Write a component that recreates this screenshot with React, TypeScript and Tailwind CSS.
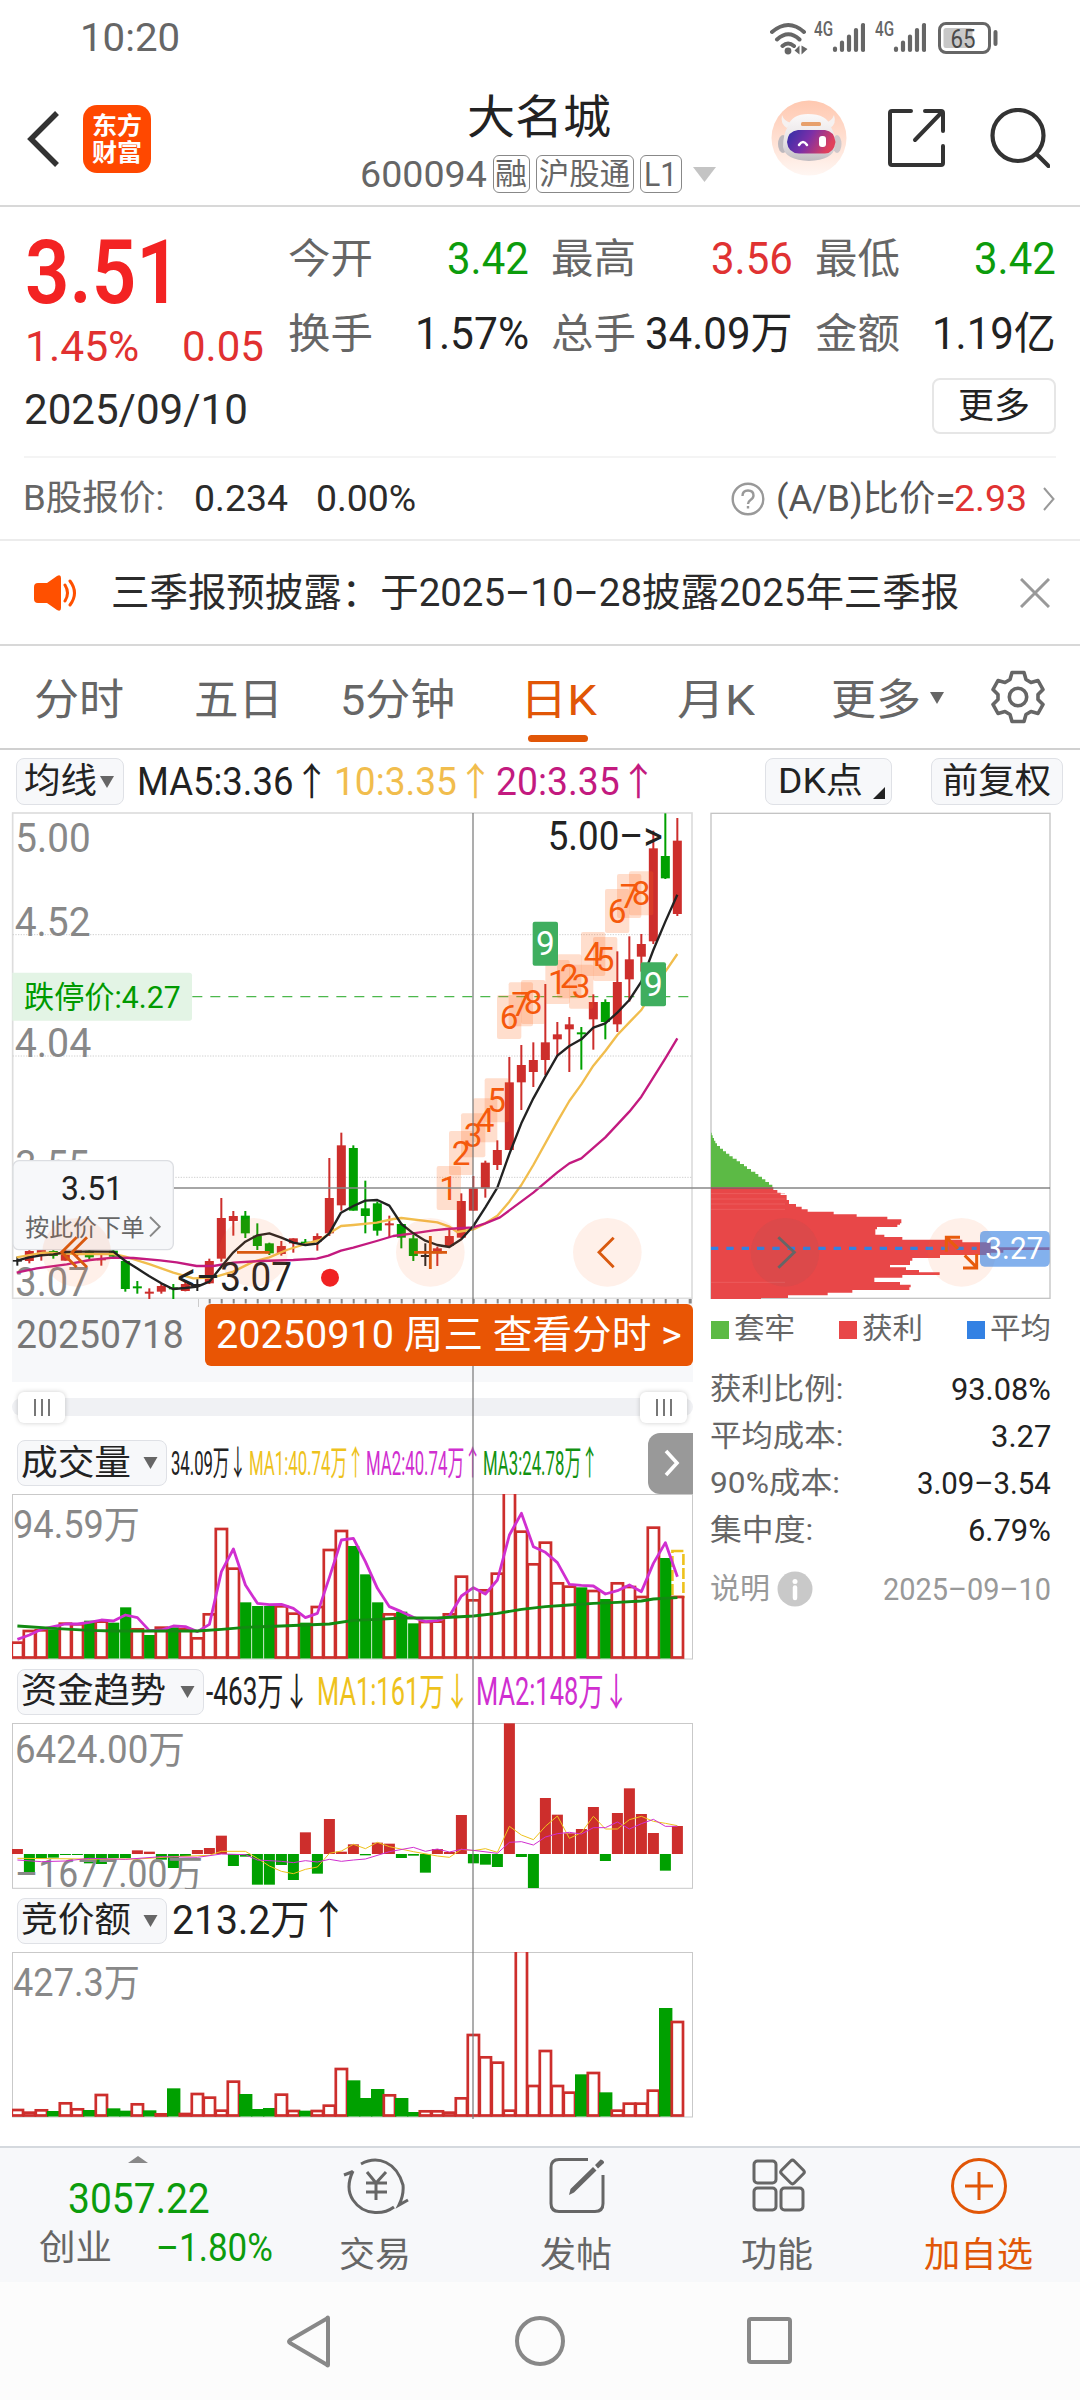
import { useLayoutEffect, useRef, useState, type ReactNode } from "react";

const RED = "#cd2e2c";
const GREEN = "#00a000";

/* One line of text, scaled horizontally so that it fills a given width. */
function Fit({ w, className = "", children }: { w: number; className?: string; children: ReactNode }) {
  const ref = useRef<HTMLSpanElement>(null);
  const [scale, setScale] = useState(1);
  useLayoutEffect(() => {
    if (ref.current) setScale((w + 3) / ref.current.offsetWidth);
  }, [w]);
  return (
    <span className={`block shrink-0 leading-none ${className}`} style={{ width: w }}>
      <span
        ref={ref}
        className="-ml-[2px] inline-block origin-left whitespace-pre align-top"
        style={{ transform: `scaleX(${scale})` }}
      >
        {children}
      </span>
    </span>
  );
}

function Label({ x, y, w, size, fill = "#888", children }: { x: number; y: number; w: number; size: number; fill?: string; children: ReactNode }) {
  return (
    <text x={x} y={y} fontSize={size} fill={fill} textLength={w} lengthAdjust="spacingAndGlyphs">
      {children}
    </text>
  );
}

function Down({ className = "" }: { className?: string }) {
  return (
    <svg viewBox="0 0 14 12" className={className} fill="#666">
      <path d="M0 0h14L7 12z" />
    </svg>
  );
}

/* ---------- chart data ---------- */

type Candle = [string, number, number, number, number];

// colour, body top, body bottom, wick top, wick bottom
const candles: Candle[] = [
  ["k", 1380, 1385, 1370, 1397], ["r", 1353, 1383, 1350, 1390], ["r", 1350, 1368, 1350, 1382],
  ["g", 1353, 1368, 1350, 1376], ["r", 1352, 1382, 1350, 1382], ["r", 1350, 1365, 1350, 1368],
  ["g", 1352, 1372, 1350, 1380], ["r", 1376, 1381, 1365, 1397], ["g", 1352, 1370, 1350, 1372],
  ["g", 1383, 1467, 1380, 1475], ["g", 1459, 1465, 1443, 1481], ["r", 1475, 1481, 1465, 1497],
  ["r", 1458, 1475, 1450, 1481], ["g", 1462, 1468, 1452, 1497], ["r", 1452, 1473, 1445, 1474],
  ["k", 1452, 1458, 1435, 1473], ["r", 1383, 1450, 1376, 1452], ["r", 1254, 1376, 1194, 1385],
  ["r", 1248, 1263, 1233, 1307], ["g", 1247, 1300, 1233, 1314], ["g", 1307, 1338, 1270, 1350],
  ["g", 1330, 1360, 1328, 1365], ["r", 1338, 1362, 1323, 1367], ["r", 1315, 1330, 1315, 1358],
  ["g", 1325, 1330, 1317, 1335], ["r", 1308, 1325, 1300, 1352], ["r", 1194, 1300, 1074, 1308],
  ["r", 1036, 1216, 998, 1232], ["g", 1044, 1232, 1036, 1232], ["g", 1225, 1248, 1142, 1300],
  ["g", 1210, 1292, 1205, 1307], ["r", 1270, 1276, 1247, 1312], ["g", 1272, 1313, 1270, 1345],
  ["g", 1315, 1368, 1305, 1383], ["k", 1365, 1371, 1330, 1398], ["r", 1345, 1360, 1340, 1398],
  ["r", 1308, 1338, 1290, 1340], ["r", 1203, 1313, 1180, 1315], ["r", 1165, 1232, 1128, 1232],
  ["r", 1088, 1165, 1082, 1193], ["r", 1050, 1095, 1021, 1110], ["r", 847, 1050, 771, 1050],
  ["r", 795, 847, 735, 930], ["r", 780, 816, 727, 861], ["r", 727, 780, 552, 825],
  ["r", 703, 718, 666, 770], ["r", 673, 688, 651, 816], ["g", 697, 703, 681, 809],
  ["r", 606, 658, 583, 749], ["g", 606, 666, 598, 718], ["r", 546, 673, 454, 696],
  ["r", 478, 538, 409, 605], ["r", 432, 470, 402, 515], ["r", 145, 424, 92, 432],
  ["g", 168, 235, 40, 237], ["r", 122, 342, 54, 348],
];

const tags: [string, number, number][] = [
  ["1", 1310, 1098], ["2", 1347, 993], ["3", 1383, 940], ["4", 1419, 895], ["5", 1454, 835],
  ["6", 1491, 585], ["7", 1526, 547], ["8", 1563, 540], ["9", 1598, 365], ["1", 1636, 480],
  ["2", 1671, 463], ["3", 1707, 494], ["4", 1743, 396], ["5", 1779, 411], ["6", 1815, 267],
  ["7", 1851, 222], ["8", 1887, 214], ["9", 1922, 487],
];

const ma5 =
  "50,1382 88,1372 123,1366 160,1363 200,1356 267,1354 340,1355 376,1383 411,1405 447,1428 484,1450 519,1467 556,1464 592,1460 628,1445 664,1400 700,1357 736,1325 772,1306 808,1300 844,1313 880,1328 916,1335 952,1331 988,1300 1023,1238 1060,1218 1096,1202 1132,1200 1168,1217 1204,1272 1240,1300 1276,1322 1312,1335 1348,1341 1384,1318 1420,1278 1456,1222 1492,1163 1528,1062 1564,970 1600,895 1636,830 1672,767 1708,738 1744,718 1780,683 1816,670 1852,638 1888,600 1924,545 1960,450 1996,365 2032,284";
const ma10 =
  "50,1372 130,1358 230,1362 340,1362 376,1370 450,1393 520,1418 580,1435 640,1432 700,1415 760,1385 808,1372 860,1350 916,1332 960,1320 1000,1292 1023,1278 1060,1275 1130,1268 1180,1257 1204,1254 1312,1267 1348,1280 1372,1296 1420,1288 1456,1270 1492,1247 1528,1205 1564,1155 1600,1095 1672,965 1708,903 1744,853 1780,797 1816,753 1852,705 1888,667 1924,630 1996,515 2032,462";
const ma20 =
  "50,1418 110,1405 200,1393 270,1380 340,1373 400,1374 480,1381 530,1387 590,1398 640,1398 700,1388 780,1383 880,1380 950,1376 985,1367 1023,1352 1060,1343 1130,1323 1180,1308 1240,1300 1300,1291 1340,1287 1420,1282 1456,1270 1500,1252 1600,1178 1672,1117 1708,1090 1744,1075 1816,1012 1888,935 1924,890 1996,775 2032,715";

const volume =
  "1055r 1020r 1018r 1018g 998r 1000r 992g 992r 998g 952g 1015r 1035g 1010r 1012g 1015r 1042r 970r 714r 833r 937g 948g 948g 946r 968r 998g 948r 777r 720r 768g 853g 937g 970r 965g 1000g 993r 992r 970r 857r 928r 898r 848r 606r 722r 820r 755r 877r 887r 892g 900r 927g 877r 888r 918r 710r 804g 918r";
const volumeMa =
  "1048 1035 1018 1010 1002 1002 997 990 993 975 983 1022 1020 1008 1010 1025 1003 845 777 885 940 944 943 955 983 970 862 750 745 815 895 950 965 982 995 992 978 918 893 912 870 735 670 770 787 818 883 886 888 912 902 885 905 820 758 860";
const volumeLong: [number, number][] = [
  [0, 1008], [3, 1015], [6, 1021], [8, 1023], [15, 1023], [17, 1018], [19, 1012], [22, 1008], [26, 1002], [28, 991], [30, 988],
  [32, 984], [35, 984], [38, 978], [40, 970], [42, 958], [44, 950], [46, 945], [48, 940], [50, 937], [52, 933], [53, 927], [55, 923],
];
const funds =
  "567r 638g 595g 593g 585g 585g 610g 612g 594g 594g 571r 575r 599g 624g 588g 570r 564r 527r 618g 590g 674g 674g 615g 660g 517r 641g 477r 575r 553r 586g 548r 551r 594g 587g 638g 567r 576r 465r 610g 614g 621g 190r 591g 684g 414r 464r 520r 507r 441r 603g 459r 385r 462r 519r 632g 498r";
const fundsMa1: [number, number][] = [
  [0, 595], [6, 597], [10, 597], [13, 590], [16, 586], [17, 574], [19, 574], [20, 595], [21, 618], [22, 634], [23, 641], [24, 628],
  [25, 621], [26, 580], [27, 573], [28, 553], [29, 566], [30, 547], [31, 560], [33, 575], [35, 588], [36, 592], [37, 568], [38, 572],
  [39, 566], [40, 577], [41, 499], [42, 525], [43, 539], [44, 499], [45, 468], [46, 535], [47, 518], [48, 469], [49, 507], [50, 507],
  [51, 479], [52, 469], [53, 484], [54, 490], [55, 497],
];
const fundsMa2: [number, number][] = [
  [0, 600], [2, 605], [4, 603], [6, 595], [9, 598], [12, 590], [15, 592], [17, 582], [19, 584], [20, 600], [22, 604], [23, 608],
  [24, 602], [25, 606], [26, 598], [27, 604], [28, 600], [29, 597], [31, 575], [33, 562], [34, 574], [35, 567], [36, 576], [37, 568],
  [38, 571], [40, 580], [41, 547], [42, 545], [43, 555], [44, 531], [45, 521], [46, 517], [47, 522], [48, 503], [49, 503], [50, 486],
  [51, 507], [52, 491], [53, 478], [54, 499], [55, 499],
];
const auction =
  "1347r 1355r 1348r 1353g 1327r 1345r 1350g 1302r 1345g 1352g 1330r 1351g 1360r 1285g 1359r 1299r 1310r 1349r 1262r 1302g 1347g 1344g 1301r 1350r 1352g 1350r 1334r 1224r 1261g 1314g 1287g 1303r 1314g 1356g 1351r 1351r 1355r 1312r 1122r 1189r 1205r 1349r 870r 1275r 1170r 1275r 1295r 1243g 1236r 1297g 1349r 1328r 1328r 1289r 1044g 1083r";

const parseBars = (s: string) => s.split(" ").map((t) => ({ v: parseInt(t, 10), up: t.endsWith("r") }));
const cx = (i: number) => 17.4 + 12 * i;
const line = (base: number, pts: [number, number][]) => pts.map(([i, v]) => `${cx(i)},${base + v / 3}`).join(" ");
const volumeMaPts = volumeMa.split(" ").map((v, i) => [i, Number(v)] as [number, number]);

function HollowBars({ data, base, bottom, gap }: { data: string; base: number; bottom: number; gap: number }) {
  return (
    <g>
      {parseBars(data).map((b, i) => {
        const top = base + b.v / 3;
        return b.up ? (
          <rect key={i} x={cx(i) - 5.6} y={top + 1} width={11.2} height={Math.max(bottom - top - 2, 0.5)} fill="#fff" stroke={RED} strokeWidth={2.7} />
        ) : (
          <rect key={i} x={cx(i) - 6 + gap} y={top} width={12.6 - gap * 2} height={bottom - top} fill={GREEN} />
        );
      })}
    </g>
  );
}

/* ---------- chart panels ---------- */

function KLineChart() {
  const color: Record<string, string> = { r: RED, g: GREEN, k: "#222" };
  return (
    <svg viewBox="36 39 2043 1458" className="block h-[486px] w-[681px] overflow-visible">
      <rect x={38} y={39} width={2038} height={1456} fill="#fff" stroke="#ddd" strokeWidth={5} />
      {[404, 768, 1132].map((y) => (
        <line key={y} x1={38} x2={2078} y1={y} y2={y} stroke="#d0d0d0" strokeWidth={3} strokeDasharray="4 4" />
      ))}
      <line x1={577} x2={2070} y1={590} y2={590} stroke="#4cb84c" strokeWidth={4} strokeDasharray="30 24" />
      {candles.map(([c, t, b, wt, wb], i) => {
        const x = 52 + 36 * i;
        return (
          <g key={i} fill={color[c]}>
            <rect x={x - 3} y={wt} width={6} height={wb - wt} />
            <rect x={x - 13.5} y={t} width={27} height={b - t} />
          </g>
        );
      })}
      <Label x={46} y={157} w={226} size={123}>5.00</Label>
      <Label x={44} y={409} w={228} size={123}>4.52</Label>
      <Label x={44} y={772} w={230} size={123}>4.04</Label>
      <Label x={46} y={1138} w={222} size={123}>3.55</Label>
      <Label x={46} y={1489} w={222} size={123}>3.07</Label>
      {tags.map(([n, x, y], i) =>
        n === "9" ? null : (
          <rect key={i} x={x} y={y} width={73} height={132} rx={6} fill="#ff6a1a" fillOpacity={0.22} />
        ),
      )}
      {tags.map(([n, x, y], i) =>
        n === "9" ? null : (
          <text key={i} x={x + 36} y={y + 101} fontSize={100} fill="#f5590c" textAnchor="middle">
            {n}
          </text>
        ),
      )}
      <g fill="none" strokeWidth={7} strokeLinejoin="round">
        <polyline points={ma10} stroke="#f1bd4d" />
        <polyline points={ma20} stroke="#c31a7f" />
        <polyline points={ma5} stroke="#222" />
      </g>
      {tags.map(([n, x, y], i) =>
        n === "9" ? (
          <g key={i}>
            <rect x={x} y={y} width={76} height={132} rx={6} fill="#3fae5f" />
            <text x={x + 38} y={y + 101} fontSize={100} fill="#fff" textAnchor="middle">
              9
            </text>
          </g>
        ) : null,
      )}
      <Label x={1643} y={151} w={345} size={121} fill="#222">5.00–&gt;</Label>
      <Label x={532} y={1472} w={344} size={121} fill="#222">&lt;–3.07</Label>
      <circle cx={990} cy={1433} r={27} fill="#f02222" />
      <path d="M37 518H568q8 0 8 8V654q0 8-8 8H37z" fill="#e3f4e5" />
      <Label x={72} y={623} w={470} size={92} fill="#009a00">跌停价:4.27</Label>
      <line x1={520} x2={2133} y1={1164} y2={1164} stroke="#888" strokeWidth={4} />
      <rect x={39} y={1082} width={481} height={267} rx={18} fill="#f7f8fa" stroke="#dcdee2" strokeWidth={4} />
      <Label x={183} y={1199} w={186} size={101} fill="#222">3.51</Label>
      <Label x={76} y={1308} w={358} size={72} fill="#666">按此价下单</Label>
      <path d="M450 1251l29 29-29 29" fill="none" stroke="#888" strokeWidth={6} />
      <g fill="#fb6a24" fillOpacity={0.1}>
        {[230, 760, 1291, 1822].map((x) => (
          <circle key={x} cx={x} cy={1357} r={103} />
        ))}
      </g>
      <g fill="none" stroke="#d9590f" strokeWidth={8.5}>
        <path d="M230 1312l-45 45 45 45M261 1312l-45 45 45 45M711 1357h98M1242 1357h99M1291 1308v99M1841 1313l-44 44 44 45" />
      </g>
    </svg>
  );
}

function ChipChart() {
  return (
    <svg viewBox="2133 39 1017 1458" className="block h-[486px] w-[339px] overflow-visible">
      <rect x={2133} y={40} width={1017} height={1455} fill="#fff" stroke="#c4c4c4" strokeWidth={4} />
      <g transform="translate(2070 900)">
        <path d="M63 98h2v8h3v8h4v8h4v8h5v8h9v8h9v8h9v7h10v8h10v7h12v8h10v8h12v7h9v8h12v8h13v7h9v8h11v8h10v8h11v8h10v8H63z" fill="#5cba45" />
        <path
          d="M63 262H250V270H262V278H272V285H290V300H297V312H318V320H335V328H353V335H431V343H500V350H592V358H634V370H630V374H622V381H561V388H556V404H583V411H637V419H817V427H902V442H1078V450H940V458H902V465H750V474H667V482H660V495H600V502H648V510H687V517H749V525H637V533H553V546H630V554H662V562H658V570H487V578H413V586H294V594H213V597H63z"
          fill="#e84748"
        />
        {[281, 297, 312, 328, 547].map((y) => (
          <line key={y} x1={63} x2={285} y1={y} y2={y} stroke="#f07070" strokeWidth={1.5} />
        ))}
        <line x1={63} x2={860} y1={445} y2={445} stroke="#3381e3" strokeWidth={10} strokeDasharray="22 24" />
        <line x1={63} x2={1080} y1={264} y2={264} stroke="#666" strokeOpacity={0.8} strokeWidth={4} />
        <circle cx={285} cy={457} r={103} fill="#666" fillOpacity={0.09} />
        <path d="M265 412l48 45-48 46" fill="none" stroke="#666" strokeWidth={8.5} />
        <circle cx={815} cy={457} r={103} fill="#fb6a24" fillOpacity={0.1} />
        <path d="M769 455V412H810M770 413l34 33M824 466l36 36M860 462v42H819" fill="none" stroke="#e85b0c" strokeWidth={9} />
        <rect x={870} y={393} width={209} height={107} rx={14} fill="#3d85e3" fillOpacity={0.64} />
        <Label x={886} y={478} w={174} size={94} fill="#fff">3.27</Label>
      </g>
    </svg>
  );
}

function VolumeChart() {
  return (
    <svg viewBox="12 1494 681 166" className="block h-[166px] w-[681px]">
      <rect x={12.5} y={1494.5} width={680} height={164.5} fill="#fff" stroke="#c9c9c9" />
      <Label x={13} y={1538} w={127} size={38}>94.59万</Label>
      <rect x={cx(55) - 5} y={1551} width={11} height={46} fill="none" stroke="#eec21c" strokeWidth={2.6} strokeDasharray="11 3" />
      <HollowBars data={volume} base={1290} bottom={1658.5} gap={0.7} />
      <g fill="none" strokeLinejoin="round" strokeWidth={2.8}>
        <polyline points={line(1290, volumeMaPts)} stroke="#d02fd0" />
        <polyline points={line(1290, volumeLong)} stroke="#128a12" />
      </g>
    </svg>
  );
}

function FundsChart() {
  return (
    <svg viewBox="12 1723 681 166" className="block h-[166px] w-[681px]">
      <rect x={12.5} y={1723.5} width={680} height={164.8} fill="#fff" stroke="#c9c9c9" />
      {parseBars(funds).map((b, i) => {
        const y = 1660 + b.v / 3;
        return <rect key={i} x={cx(i) - 5.5} y={Math.min(y, 1854)} width={11} height={Math.abs(y - 1854)} fill={b.up ? RED : GREEN} />;
      })}
      <Label x={15} y={1763} w={170} size={38}>6424.00万</Label>
      <Label x={15} y={1886.5} w={188} size={38}>–1677.00万</Label>
      <g fill="none">
        <polyline points={line(1660, fundsMa1)} stroke="#eec21c" />
        <polyline points={line(1660, fundsMa2)} stroke="#d02fd0" />
      </g>
    </svg>
  );
}

function AuctionChart() {
  return (
    <svg viewBox="12 1952 681 166" className="block h-[166px] w-[681px]">
      <rect x={12.5} y={1952.5} width={680} height={164.5} fill="#fff" stroke="#c9c9c9" />
      <Label x={13} y={1996} w={127} size={38}>427.3万</Label>
      <HollowBars data={auction} base={1660} bottom={2116.5} gap={-0.4} />
    </svg>
  );
}

function Picker({ w, text, className }: { w: number; text: string; className: string }) {
  return (
    <div className={`ml-[5px] flex h-[46px] shrink-0 items-center justify-between rounded-lg border border-[#dfe1e6] bg-[#f7f8fa] pr-2 pl-[5px] text-[35px] text-[#222] ${className}`}>
      <Fit w={w}>{text}</Fit>
      <Down className="h-[12px] w-[15px]" />
    </div>
  );
}

/* ---------- page sections ---------- */

function Signal() {
  return (
    <div className="flex h-[32px] items-start">
      <Fit w={16} className="-mt-[3px] ml-[1px] text-[20px] font-medium">4G</Fit>
      <svg viewBox="0 0 33 32" className="h-[32px] w-[33px]" stroke="#666" strokeWidth={4.2} strokeLinecap="round">
        <path d="M3 26.500v1.500M10 20.500v7.500M17 14.500v13.500M24 8v20M31 3v25" />
      </svg>
    </div>
  );
}

function StatusBar() {
  return (
    <div className="flex h-[76px] items-center pr-[82px] pl-[82px] text-[#666]">
      <Fit w={97} className="mr-auto text-[39px]">10:20</Fit>
      <svg viewBox="0 0 38 34" className="mr-[7px] h-[34px] w-[38px]" fill="none" stroke="#666" strokeWidth={4} strokeLinecap="round">
        <path d="M2 11Q18.500-3 34 11M7 18.500Q18.500 8 29.500 18.500M12.500 25Q18 20 24 25" />
        <circle cx={18} cy={30} r={3.4} fill="#666" stroke="none" />
        <path d="M29.500 24.500v9l-5-4zM31.500 24.500v9l6-5.500z" fill="#666" stroke="none" />
      </svg>
      <Signal />
      <div className="w-[11px]" />
      <Signal />
      <svg viewBox="0 0 60 32" className="ml-[12px] h-[32px] w-[60px]">
        <rect x={1.500} y={1.500} width={50} height={29} rx={6.500} fill="none" stroke="#666" strokeWidth={3} />
        <rect x={5.500} y={6} width={29} height={20} rx={2.500} fill="#c8c8c8" />
        <rect x={55.500} y={8} width={4} height={16} rx={2} fill="#666" />
        <text x={12.500} y={25.500} fontSize={25} fill="#4a4a4a" textLength={25} lengthAdjust="spacingAndGlyphs">65</text>
      </svg>
    </div>
  );
}

function Robot() {
  return (
    <svg viewBox="0 0 76 76" className="h-[76px] w-[76px]">
      <defs>
        <linearGradient id="halo" x1="0" x2="0" y1="0" y2="1">
          <stop offset="0" stopColor="#ffc8b0" />
          <stop offset="1" stopColor="#fff6f2" />
        </linearGradient>
        <linearGradient id="visor" x1="0" x2="1" y1="0" y2="0.300">
          <stop offset="0" stopColor="#2f2fa8" />
          <stop offset="0.500" stopColor="#7a2fa8" />
          <stop offset="1" stopColor="#e0405c" />
        </linearGradient>
        <linearGradient id="shell" x1="0" x2="0" y1="0" y2="1">
          <stop offset="0" stopColor="#fbf9f9" />
          <stop offset="0.600" stopColor="#e6e2e4" />
          <stop offset="1" stopColor="#bfbbc0" />
        </linearGradient>
      </defs>
      <circle cx={38} cy={38} r={37.500} fill="url(#halo)" />
      <path d="M11 15Q9 24 16 28L20 23Q13 21 11 15zM63 15Q66 24 59 28L54 23Q61 21 63 15z" fill="#f6f1f0" />
      <ellipse cx={12} cy={44} rx={5} ry={9} fill="#bdb8bd" />
      <ellipse cx={66} cy={44} rx={4.500} ry={9} fill="#cfc8cb" />
      <path d="M37 14Q56 14 60 27Q65 36 64 47Q62 60 38 61Q14 60 12 47Q12 35 17 26Q21 14 37 14z" fill="url(#shell)" />
      <rect x={30} y={22} width={20} height={4} rx={1.500} fill="#e7a06c" />
      <path d="M27 30H54Q63 31 64.500 42Q63 53 54 53.500H28Q17 53 16 42Q17 31 27 30z" fill="url(#visor)" />
      <path d="M28 45q4-6 8 0" fill="none" stroke="#fff" strokeWidth={2.500} strokeLinecap="round" />
      <rect x={48} y={36} width={7} height={11} rx={3} fill="#fff" />
    </svg>
  );
}

function Header() {
  return (
    <div className="flex h-[131px] items-start justify-between border-b-2 border-[#d8d8d8] pt-[24px] pr-[28px] pl-[26px]">
      <div className="flex w-[282px] items-center pt-[5px]">
        <svg viewBox="0 0 34 58" className="h-[58px] w-[34px]" fill="none" stroke="#333" strokeWidth={5.500}>
          <path d="M31 3L5 29l26 26" />
        </svg>
        <div className="ml-[23px] flex h-[68px] w-[68px] flex-col items-center justify-center gap-[3px] rounded-[14px] bg-[#ff4800] text-[24px] font-bold text-white">
          <Fit w={47}>东方</Fit>
          <Fit w={47}>财富</Fit>
        </div>
      </div>
      <div className="-mt-[6px] flex flex-col items-center gap-[15px]">
        <Fit w={141} className="text-[46px] text-[#222]">大名城</Fit>
        <div className="flex h-[38px] items-center text-[#666]">
          <Fit w={124} className="text-[37px]">600094</Fit>
          <div className="ml-[7px] flex h-[38px] items-center rounded-md border border-[#888] px-[3px] text-[30px]">
            <Fit w={29}>融</Fit>
          </div>
          <div className="ml-[6px] flex h-[38px] items-center rounded-md border border-[#888] px-[4px] text-[30px]">
            <Fit w={88}>沪股通</Fit>
          </div>
          <div className="ml-[6px] flex h-[38px] items-center rounded-md border border-[#888] px-[5px] text-[33px]">
            <Fit w={30}>L1</Fit>
          </div>
          <svg viewBox="0 0 23 15" className="ml-[11px] h-[15px] w-[23px]" fill="#c4c4c4">
            <path d="M0 0h23L11.500 15z" />
          </svg>
        </div>
      </div>
      <div className="flex w-[282px] items-center justify-end">
        <Robot />
        <svg viewBox="0 0 60 60" className="ml-[40px] h-[60px] w-[60px]" fill="none" stroke="#333" strokeWidth={4} strokeLinecap="round">
          <path d="M24 3H5q-2 0-2 2v50q0 2 2 2h49q2 0 2-2V38M38 3h16q2 0 2 2v18M55 4L28 32" />
        </svg>
        <svg viewBox="0 0 60 60" className="mr-[2px] ml-[43px] h-[60px] w-[60px]" fill="none" stroke="#333" strokeWidth={4.200} strokeLinecap="round">
          <circle cx={28} cy={27.500} r={25.500} />
          <path d="M46.500 46l12 12" />
        </svg>
      </div>
    </div>
  );
}

function Stat({ name, value, w, color, className }: { name: string; value: string; w: number; color: string; className: string }) {
  return (
    <div className={`flex items-center justify-between ${className}`}>
      <Fit w={82} className="text-[41px] text-[#666]">{name}</Fit>
      <Fit w={w} className={`text-[44px] ${color}`}>{value}</Fit>
    </div>
  );
}

function Quote() {
  return (
    <div className="mx-[24px] h-[251px] border-b-2 border-[#f4f4f4]">
      <div className="flex h-[166px]">
        <div className="w-[266px] pt-[21px] pl-[3px]">
          <Fit w={153} className="text-[89px] font-semibold text-[#f32323]">3.51</Fit>
          <div className="mt-[8px] flex gap-[46px] text-[43px] text-[#e13030]">
            <Fit w={111}>1.45%</Fit>
            <Fit w={79}>0.05</Fit>
          </div>
        </div>
        <div className="flex flex-col gap-[31px] pt-[30px]">
          <div className="flex h-[44px] gap-[25px]">
            <Stat name="今开" value="3.42" w={79} color="text-[#0c9c0c]" className="w-[238px]" />
            <Stat name="最高" value="3.56" w={79} color="text-[#e03232]" className="w-[239px]" />
            <Stat name="最低" value="3.42" w={79} color="text-[#0c9c0c]" className="w-[238px]" />
          </div>
          <div className="flex h-[44px] gap-[25px]">
            <Stat name="换手" value="1.57%" w={111} color="text-[#222]" className="w-[238px]" />
            <Stat name="总手" value="34.09万" w={145} color="text-[#222]" className="w-[239px]" />
            <Stat name="金额" value="1.19亿" w={121} color="text-[#222]" className="w-[238px]" />
          </div>
        </div>
      </div>
      <div className="flex h-[66px] items-center justify-between">
        <Fit w={221} className="mt-[6px] ml-[2px] text-[43px] text-[#2b2b2b]">2025/09/10</Fit>
        <div className="flex h-[56px] w-[124px] items-center justify-center rounded-lg border-2 border-[#e6e6e6] text-[35px] text-[#222]">
          <Fit w={69}>更多</Fit>
        </div>
      </div>
    </div>
  );
}

function BShare() {
  return (
    <div className="flex h-[83px] items-center border-b-2 border-[#ececec] px-[25px] text-[37px] text-[#2b2b2b]">
      <Fit w={138} className="text-[35px] text-[#666]">B股报价:</Fit>
      <Fit w={91} className="ml-[33px]">0.234</Fit>
      <Fit w={97} className="ml-[31px]">0.00%</Fit>
      <svg viewBox="0 0 34 34" className="ml-auto h-[34px] w-[34px]" fill="none" stroke="#999" strokeWidth={2.400}>
        <circle cx={17} cy={17} r={15.300} />
        <path d="M11.500 14q0-5.500 5.500-5.500t5.500 5q0 2.500-3 4.500-2.500 1.700-2.500 4M17 24v2.500" />
      </svg>
      <Fit w={176} className="ml-[13px] text-[36px] text-[#555]">(A/B)比价=</Fit>
      <Fit w={70} className="ml-[2px] text-[#e03232]">2.93</Fit>
      <svg viewBox="0 0 12 24" className="ml-[17px] h-[24px] w-[12px]" fill="none" stroke="#999" strokeWidth={2}>
        <path d="M1 1l9.500 11L1 23" />
      </svg>
    </div>
  );
}

function Notice() {
  return (
    <div className="flex h-[105px] items-center border-b-2 border-[#d8d8d8] pr-[30px] pl-[34px]">
      <svg viewBox="0 0 44 36" className="h-[36px] w-[44px]" fill="#ff5000">
        <path d="M4 8h9L23 1q4-2 4 2v30q0 4-4 2l-10-7H4q-4 0-4-4V12q0-4 4-4z" />
        <path d="M31 10q5 8 0 16M36 6q9 12 0 24" fill="none" stroke="#ff5000" strokeWidth={3} strokeLinecap="round" />
      </svg>
      <Fit w={845} className="mt-[2px] ml-[35px] text-[39px] text-[#2b2b2b]">三季报预披露：于2025–10–28披露2025年三季报</Fit>
      <svg viewBox="0 0 30 30" className="ml-auto h-[30px] w-[30px]" stroke="#999" strokeWidth={3}>
        <path d="M1 1l28 28M29 1L1 29" />
      </svg>
    </div>
  );
}

function Tabs() {
  return (
    <div className="relative flex h-[104px] items-center border-b-2 border-[#d0d0d0] pt-[7px] pl-[36px] text-[43px] text-[#666]">
      <Fit w={87}>分时</Fit>
      <Fit w={86} className="ml-[73px]">五日</Fit>
      <Fit w={112} className="ml-[60px]">5分钟</Fit>
      <Fit w={74} className="ml-[68px] text-[#e15607]">日K</Fit>
      <Fit w={75} className="ml-[83px]">月K</Fit>
      <Fit w={87} className="ml-[79px]">更多</Fit>
      <Down className="-mt-[6px] ml-[10px] h-[12px] w-[14px]" />
      <svg viewBox="-27 -27 54 54" className="-mt-[7px] ml-[47px] h-[54px] w-[54px]" fill="none" stroke="#666" strokeWidth={3.600} strokeLinejoin="round">
        <path d="M-6-24.500H6L8-17.500L13-14.500L20-16.500L25-7.500L20-2.500V2.500L25 7.500L20 16.500L13 14.500L8 17.500L6 24.500H-6L-8 17.500L-13 14.500L-20 16.500L-25 7.500L-20 2.500V-2.500L-25-7.500L-20-16.500L-13-14.500L-8-17.500z" />
        <circle r={8.700} />
      </svg>
      <span className="absolute bottom-[6px] left-[528px] h-[7px] w-[60px] rounded-full bg-[#e15607]" />
    </div>
  );
}

function AverageBar() {
  return (
    <div className="flex h-[63px] items-center pr-[17px] pl-[16px] text-[38px] text-[#222]">
      <div className="flex h-[47px] w-[108px] items-center justify-between rounded-lg border border-[#dfe1e6] bg-[#f7f8fa] px-[9px] text-[35px]">
        <Fit w={70}>均线</Fit>
        <Down className="h-[12px] w-[14px]" />
      </div>
      <Fit w={190} className="ml-[15px]">MA5:3.36↑</Fit>
      <Fit w={157} className="ml-[7px] text-[#f1bd4d]">10:3.35↑</Fit>
      <Fit w={158} className="ml-[5px] text-[#c31a7f]">20:3.35↑</Fit>
      <div className="ml-auto flex h-[47px] w-[127px] items-center justify-between rounded-lg border border-[#dfe1e6] bg-[#f7f8fa] pr-[6px] pl-[14px] text-[35px]">
        <Fit w={82}>DK点</Fit>
        <svg viewBox="0 0 12 12" className="mt-[22px] h-[12px] w-[12px]" fill="#222">
          <path d="M12 0v12H0z" />
        </svg>
      </div>
      <div className="ml-[39px] flex h-[47px] w-[132px] items-center justify-center rounded-lg border border-[#dfe1e6] bg-[#f7f8fa] text-[35px]">
        <Fit w={106}>前复权</Fit>
      </div>
    </div>
  );
}

function DateStrip() {
  return (
    <div className="relative flex h-[83px] bg-[#f7f8fa] pt-[5px] pl-[6px]">
      <svg viewBox="0 0 681 8" className="absolute top-0 left-0 h-[8px] w-[681px]">
        <path d="M186.500 0v8" stroke="#ccc" />
        {Array.from({ length: 41 }, (_, i) => (
          <rect key={i} x={196.700 + i * 12} y={0} width={i === 9 || i === 40 ? 3 : 2} height={4.500} fill="#888" />
        ))}
      </svg>
      <Fit w={165} className="mt-[12px] text-[38px] text-[#777]">20250718</Fit>
      <div className="relative z-10 ml-auto flex h-[62px] w-[488px] items-center rounded-[6px] bg-[#e95504] pl-[13px] text-[39px] text-white">
        <Fit w={463}>20250910 周三 查看分时 &gt;</Fit>
      </div>
    </div>
  );
}

function Handle() {
  return (
    <div className="flex h-[31px] w-[47px] items-center justify-center gap-[5px] rounded-md bg-white shadow-[0_0_5px_rgba(0,0,0,0.2)]">
      <i className="h-[17px] w-[2px] bg-[#777]" />
      <i className="h-[17px] w-[2px] bg-[#777]" />
      <i className="h-[17px] w-[2px] bg-[#777]" />
    </div>
  );
}

function RangeSlider() {
  return (
    <div className="flex h-[50px] items-center">
      <div className="flex h-[18px] w-full items-center justify-between rounded-full bg-[#f0f1f4] px-[6px]">
        <Handle />
        <Handle />
      </div>
    </div>
  );
}

function LegendItem({ color, text }: { color: string; text: string }) {
  return (
    <div className="flex items-center gap-[7px]">
      <i className={`h-[18px] w-[18px] ${color}`} />
      <Fit w={58}>{text}</Fit>
    </div>
  );
}

function CostRow({ name, nw, value, vw }: { name: string; nw: number; value: string; vw: number }) {
  return (
    <div className="flex h-[47px] items-center justify-between pl-[1px]">
      <Fit w={nw} className="text-[30px] text-[#666]">{name}</Fit>
      <Fit w={vw} className="text-[32px] text-[#222]">{value}</Fit>
    </div>
  );
}

function Charts() {
  return (
    <div className="flex h-[1333px] gap-[18px] pl-[12px]">
      <div className="relative w-[681px]">
        <KLineChart />
        <DateStrip />
        <RangeSlider />
        <div className="flex h-[62px] items-center text-[34px]">
          <Picker w={107} text="成交量" className="w-[150px]" />
          <Fit w={72} className="ml-[6px] text-[#222]">34.09万↓</Fit>
          <Fit w={112} className="ml-[6px] text-[#eec21c]">MA1:40.74万↑</Fit>
          <Fit w={112} className="ml-[5px] text-[#d02fd0]">MA2:40.74万↑</Fit>
          <Fit w={112} className="ml-[5px] text-[#129212]">MA3:24.78万↑</Fit>
          <div className="ml-auto flex h-[61px] w-[45px] items-center justify-center rounded-l-[12px] bg-[#999]">
            <svg viewBox="0 0 16 28" className="ml-[3px] h-[28px] w-[16px]" fill="none" stroke="#fff" strokeWidth={3.600}>
              <path d="M2 2l11 12L2 26" />
            </svg>
          </div>
        </div>
        <VolumeChart />
        <div className="flex h-[63px] items-center text-[38px]">
          <Picker w={142} text="资金趋势" className="w-[187px]" />
          <Fit w={101} className="ml-[4px] text-[#222]">-463万↓</Fit>
          <Fit w={150} className="ml-[10px] text-[#eec21c]">MA1:161万↓</Fit>
          <Fit w={150} className="ml-[9px] text-[#d02fd0]">MA2:148万↓</Fit>
        </div>
        <FundsChart />
        <div className="flex h-[63px] items-center text-[40px]">
          <Picker w={107} text="竞价额" className="w-[150px]" />
          <Fit w={173} className="ml-[7px] text-[#222]">213.2万↑</Fit>
        </div>
        <AuctionChart />
        <i className="absolute top-0 left-[460px] h-[1306px] w-[2px] bg-[#777]/60" />
      </div>
      <div className="w-[339px]">
        <ChipChart />
        <div className="flex h-[61px] items-center justify-between text-[29px] text-[#666]">
          <LegendItem color="bg-[#5cba45]" text="套牢" />
          <LegendItem color="bg-[#e84748]" text="获利" />
          <LegendItem color="bg-[#3381e3]" text="平均" />
        </div>
        <div className="pt-[5px]">
          <CostRow name="获利比例:" nw={130} value="93.08%" vw={97} />
          <CostRow name="平均成本:" nw={130} value="3.27" vw={57} />
          <CostRow name="90%成本:" nw={127} value="3.09–3.54" vw={131} />
          <CostRow name="集中度:" nw={100} value="6.79%" vw={80} />
        </div>
        <div className="mt-[12px] flex h-[48px] items-center text-[#999]">
          <Fit w={57} className="ml-[1px] text-[29px]">说明</Fit>
          <svg viewBox="0 0 36 36" className="ml-[8px] h-[36px] w-[36px]">
            <circle cx={18} cy={18} r={17.500} fill="#c9c9c9" />
            <circle cx={18} cy={10.500} r={2.500} fill="#fff" />
            <path d="M18 16.500V27" stroke="#fff" strokeWidth={4.500} strokeLinecap="round" />
          </svg>
          <Fit w={165} className="ml-auto text-[32px]">2025–09–10</Fit>
        </div>
      </div>
    </div>
  );
}

function Action({ w, text, className = "", children }: { w: number; text: string; className?: string; children: ReactNode }) {
  return (
    <div className={`flex w-[201px] flex-col items-center pl-[2px] text-[35px] ${className}`}>
      <svg viewBox="0 0 66 62" className="mt-[10px] mb-[18px] h-[62px] w-[66px] shrink-0" fill="none" stroke="currentColor" strokeWidth={3}>
        {children}
      </svg>
      <Fit w={w}>{text}</Fit>
    </div>
  );
}

function BottomBar() {
  return (
    <div className="flex h-[136px] border-t-2 border-[#d5d9de] bg-[#f7f8fa] text-[#666]">
      <div className="w-[274px] pt-[8px]">
        <svg viewBox="0 0 20 7" className="ml-[128px] h-[7px] w-[20px]" fill="#888">
          <path d="M10 0l10 7H0z" />
        </svg>
        <Fit w={139} className="mt-[15px] ml-[70px] text-[42px] text-[#0c9c0c]">3057.22</Fit>
        <div className="mt-[9px] flex items-center">
          <Fit w={70} className="ml-[41px] text-[35px]">创业</Fit>
          <Fit w={114} className="ml-[47px] text-[38px] text-[#0c9c0c]">–1.80%</Fit>
        </div>
      </div>
      <Action w={69} text="交易">
        <path d="M18 6Q31-1 43 4.500T60 27Q61 37 56 47L65 42M1 17L10 13.500M10 13Q2 30 10 42T32 54.500Q43 55 51 49" />
        <path d="M24 14l9 11 10-11M23 25h21M23 34h21M33 25v17" />
      </Action>
      <Action w={69} text="发帖">
        <path d="M44 1.500H15q-8 0-8 8v36q0 8 8 8h36q8 0 8-8V17" />
        <path d="M51 7l5.500-5.500q4 1 3.500 3.500L54 10.500zM49 9l3.500 3.500L30 34.500L25 37l1.500-6z" fill="currentColor" stroke="none" />
      </Action>
      <Action w={69} text="功能">
        <rect x={9} y={3} width={22} height={22} rx={3.500} />
        <rect x={9} y={30} width={22} height={22} rx={3.500} />
        <rect x={36} y={30} width={22} height={22} rx={3.500} />
        <rect x={38.500} y={5} width={18} height={18} rx={2.500} transform="rotate(45 47.500 14)" />
      </Action>
      <Action w={106} text="加自选" className="text-[#e15607]">
        <circle cx={33} cy={28} r={26.500} />
        <path d="M19 28h28M33 14v28" />
      </Action>
    </div>
  );
}

function NavBar() {
  return (
    <div className="flex h-[118px] items-center bg-[#fcfcfc] pl-[286px]">
      <svg viewBox="0 0 520 54" className="h-[54px] w-[520px]" fill="none" stroke="#888" strokeWidth={4}>
        <path d="M41 4.500q1-2 1 0v46q0 2-1.500 0L4 29q-2-1.500 0-3z" strokeLinejoin="round" />
        <circle cx={254} cy={27} r={23} />
        <rect x={463} y={5} width={41} height={43} rx={2} />
      </svg>
    </div>
  );
}

export default function App() {
  return (
    <div className="h-[2400px] w-[1080px] overflow-hidden bg-white font-['Roboto','Noto_Sans_CJK_SC',sans-serif]">
      <StatusBar />
      <Header />
      <Quote />
      <BShare />
      <Notice />
      <Tabs />
      <AverageBar />
      <Charts />
      <BottomBar />
      <NavBar />
    </div>
  );
}
